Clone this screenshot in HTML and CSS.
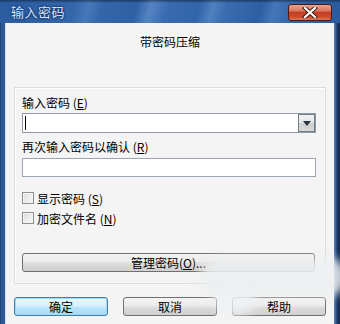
FILE: index.html
```html
<!DOCTYPE html>
<html lang="zh">
<head>
<meta charset="utf-8">
<title>输入密码</title>
<link rel="stylesheet" href="styles.css">
</head>
<body>
<div class="window">
  <div class="titlebar">
    <span class="title">输入密码</span>
    <span class="close">
      <svg width="16" height="11" viewBox="0 0 16 11"><path d="M3 1 L13 10 M13 1 L3 10" stroke="#3a1a14" stroke-width="4" stroke-linecap="square"/><path d="M3 1 L13 10 M13 1 L3 10" stroke="#ffffff" stroke-width="2.2" stroke-linecap="square"/></svg>
    </span>
  </div>
  <div class="client">
    <div class="heading">带密码压缩</div>
    <div class="group">
      <div class="label">输入密码 (<u>E</u>)</div>
      <div class="combo">
        <span class="caret"></span>
        <span class="drop"><svg width="8" height="5" viewBox="0 0 8 5"><path d="M0 0 H8 L4 5 Z" fill="#2a3340"/></svg></span>
      </div>
      <div class="label label2">再次输入密码以确认 (<u>R</u>)</div>
      <div class="input"></div>
      <div class="check first"><span class="box"></span><span>显示密码 (<u>S</u>)</span></div>
      <div class="check"><span class="box"></span><span>加密文件名 (<u>N</u>)</span></div>
      <div class="btn wide">管理密码(<u>O</u>)...</div>
    </div>
    <div class="buttons">
      <div class="btn default">确定</div>
      <div class="btn">取消</div>
      <div class="btn">帮助</div>
    </div>
  </div>
  <div class="blob"></div>
  <div class="blob blob2"></div>
</div>
</body>
</html>
```

FILE: styles.css
```css
html, body {
  margin: 0;
  padding: 0;
}
body {
  width: 340px;
  height: 324px;
  overflow: hidden;
  font-family: "Noto Sans CJK SC", "Liberation Sans", sans-serif;
  font-size: 12px;
  color: #000;
}
.window {
  position: relative;
  width: 340px;
  height: 324px;
  display: flex;
  flex-direction: column;
  background: linear-gradient(90deg, #1d3f72 0, #2d5d9c 2px, #2a5897 5px, #2a5897 334px, #5d86bd 334px, #2b5a98 336px, #1a2f52 338px);
  overflow: hidden;
}
.titlebar {
  height: 23px;
  flex: none;
  display: flex;
  align-items: center;
  padding: 0 8px 0 11px;
  box-sizing: border-box;
  background:
    linear-gradient(180deg, rgba(10,25,50,0.55) 0, rgba(10,25,50,0) 3px),
    linear-gradient(105deg, #2c5ca0 0%, #3466aa 22%, #4878b9 26%, #3466aa 30%, #2f60a4 40%, #5584c2 44%, #3a6bb0 49%, #3164a8 58%, #5080bf 62%, #3a6cb0 66%, #2e5fa3 76%, #4676b8 80%, #3264a8 86%, #2b5b9f 100%);
}
.title {
  font-size: 13px;
  color: #d8e8ff;
  letter-spacing: 0.5px;
  text-shadow: 0 0 2px #0c2650, 0 0 3px #0c2650;
}
.close {
  margin-left: auto;
  width: 44px;
  height: 17px;
  box-sizing: border-box;
  border: 1px solid #4a1a12;
  border-radius: 3px;
  background: linear-gradient(180deg, #eaa390 0%, #d9745c 40%, #c43f22 50%, #cc4b2c 80%, #e07a5c 100%);
  display: flex;
  align-items: center;
  justify-content: center;
  margin-top: 1px;
}
.client {
  flex: 1;
  margin: 0 6px 0 5px;
  background: #f4f4f4;
  border-left: 1px solid #dfe6ef;
  display: flex;
  flex-direction: column;
}
.heading {
  text-align: center;
  line-height: 16px;
  padding-top: 11px;
  height: 16px;
}
.group {
  margin: 37px 0 0 8px;
  width: 312px;
  height: 197px;
  box-sizing: border-box;
  border: 1px solid #dcdcdc;
  box-shadow: inset 1px 1px 0 #ffffff;
  padding: 7px 9px 0 7px;
  display: flex;
  flex-direction: column;
}
.label {
  line-height: 16px;
  height: 16px;
}
.label u, .check u, .btn u {
  text-decoration: underline;
}
.combo {
  margin-top: 2px;
  height: 20px;
  box-sizing: border-box;
  border: 1px solid #8f9aa6;
  background: #fff;
  display: flex;
  align-items: center;
}
.caret {
  width: 1px;
  height: 14px;
  background: #000;
  margin-left: 2px;
}
.drop {
  margin-left: auto;
  width: 17px;
  height: 18px;
  box-sizing: border-box;
  border: 1px solid #6f7c89;
  background: linear-gradient(180deg, #f2f2f2 0%, #e4e4e4 50%, #cfcfcf 51%, #d8d8d8 100%);
  display: flex;
  align-items: center;
  justify-content: center;
}
.label2 {
  margin-top: 6px;
}
.input {
  margin-top: 3px;
  height: 19px;
  box-sizing: border-box;
  border: 1px solid #9aa5b1;
  background: #fff;
}
.check {
  height: 16px;
  display: flex;
  align-items: center;
  gap: 3px;
  margin-top: 4px;
}
.check.first {
  margin-top: 13px;
}
.box {
  width: 12px;
  height: 12px;
  box-sizing: border-box;
  border: 1px solid #8e8f8f;
  background: linear-gradient(135deg, #dcdcdc 0%, #eeeeee 60%, #f8f8f8 100%);
  box-shadow: inset 0 0 0 1px #f4f4f4;
}
.btn {
  height: 19px;
  box-sizing: border-box;
  border: 1px solid #707070;
  border-radius: 3px;
  background: linear-gradient(180deg, #f3f3f3 0%, #ebebeb 48%, #dddddd 52%, #cfcfcf 100%);
  display: flex;
  align-items: center;
  justify-content: center;
  line-height: 16px;
}
.btn.wide {
  margin-top: 27px;
  width: 293px;
}
.buttons {
  margin: 13px 0 0 8px;
  width: 312px;
  display: flex;
  justify-content: space-between;
}
.buttons .btn {
  width: 94px;
}
.btn.default {
  border-color: #3c7fb1;
  box-shadow: inset 0 0 0 1px #9edcf4;
  background: linear-gradient(180deg, #eaf6fd 0%, #d9f0fc 48%, #bee6fd 52%, #a7d9f5 100%);
}
.blob {
  position: absolute;
  left: 200px;
  top: 258px;
  width: 148px;
  height: 38px;
  border-radius: 24px;
  background: rgba(236, 238, 240, 0.85);
  filter: blur(5px);
}
.blob2 {
  left: 214px;
  top: 284px;
  width: 42px;
  height: 32px;
  border-radius: 16px;
  background: rgba(238, 240, 242, 0.8);
}
```
